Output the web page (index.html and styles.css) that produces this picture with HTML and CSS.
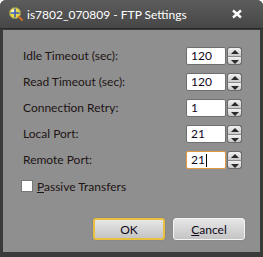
FILE: index.html
```html
<!DOCTYPE html>
<html>
<head>
<meta charset="utf-8">
<link rel="stylesheet" href="styles.css">
</head>
<body>
<div class="window">
  <div class="titlebar">
    <svg class="app-icon" width="16" height="16" viewBox="0 0 16 16">
      <circle cx="7" cy="7" r="5.6" fill="#e8d84a" stroke="#8a8a50" stroke-width="1"/>
      <circle cx="5.5" cy="5.5" r="2.2" fill="#fffbe0" opacity="0.8"/>
      <path d="M7 2.5V11.5M2.5 7H11.5" stroke="#3a5ab8" stroke-width="1.6"/>
      <path d="M10.8 10.8L14 14" stroke="#c8702a" stroke-width="2.2" stroke-linecap="round"/>
    </svg>
    <span class="title">is7802_070809 - FTP Settings</span>
    <svg class="close" width="12" height="10" viewBox="0 0 12 10">
      <path d="M2 1.5L10 8.5M10 1.5L2 8.5" stroke="#ffffff" stroke-width="2.4"/>
    </svg>
  </div>
  <div class="body">
    <div class="form">
      <label class="lbl">Idle Timeout (sec):</label>
      <div class="spinner"><div class="field">120</div><div class="spin"><div class="btn up"></div><div class="btn down"></div></div></div>
      <label class="lbl">Read Timeout (sec):</label>
      <div class="spinner"><div class="field">120</div><div class="spin"><div class="btn up"></div><div class="btn down"></div></div></div>
      <label class="lbl">Connection Retry:</label>
      <div class="spinner"><div class="field">1</div><div class="spin"><div class="btn up"></div><div class="btn down"></div></div></div>
      <label class="lbl">Local Port:</label>
      <div class="spinner"><div class="field">21</div><div class="spin"><div class="btn up"></div><div class="btn down"></div></div></div>
      <label class="lbl">Remote Port:</label>
      <div class="spinner"><div class="field focused">21<span class="caret"></span></div><div class="spin"><div class="btn up"></div><div class="btn down"></div></div></div>
    </div>
    <div class="check-row">
      <span class="checkbox"></span>
      <span class="check-label"><u>P</u>assive Transfers</span>
    </div>
    <div class="buttons">
      <div class="button default">OK</div>
      <div class="button"><u>C</u>ancel</div>
    </div>
  </div>
</div>
</body>
</html>
```
FILE: styles.css
```css
html, body {
  margin: 0;
  padding: 0;
  background: #ffffff;
}
.window {
  width: 263px;
  height: 257px;
  box-sizing: border-box;
  background: #3a3a3a;
  border-radius: 6px 6px 0 0;
  display: flex;
  flex-direction: column;
  font-family: Lato, "Noto Sans", sans-serif;
}
.titlebar {
  height: 29px;
  flex: none;
  display: flex;
  align-items: center;
  padding-left: 8px;
  padding-right: 20px;
  background: linear-gradient(#5c5c5c, #474747);
  border-radius: 6px 6px 0 0;
  border-bottom: 1px solid #2a2a2a;
  box-sizing: border-box;
}
.app-icon {
  flex: none;
  margin-right: 3px;
}
.title {
  color: #ffffff;
  font-size: 12px;
  flex: 1;
}
.close {
  flex: none;
}
.body {
  flex: 1;
  margin: 1px 3px 5px 3px;
  background: #8f8f8f;
  padding: 17px 0 0 20px;
  color: #1e1414;
  font-size: 12px;
}
.form {
  display: grid;
  grid-template-columns: 163px 56px;
  row-gap: 8px;
  align-items: center;
}
.lbl {
  line-height: 18px;
}
.spinner {
  display: flex;
  height: 18px;
}
.field {
  width: 40px;
  height: 18px;
  box-sizing: border-box;
  background: #ffffff;
  border: 1px solid #6e6e6e;
  border-radius: 2px;
  padding-left: 4px;
  line-height: 16px;
  font-size: 12px;
  color: #10081a;
  display: flex;
  align-items: center;
}
.field.focused {
  border-color: #e09a40;
}
.caret {
  display: inline-block;
  width: 1px;
  height: 13px;
  background: #000;
  margin-left: 1px;
}
.spin {
  margin-left: 1px;
  width: 15px;
  height: 18px;
  display: flex;
  flex-direction: column;
}
.btn {
  flex: 1;
  box-sizing: border-box;
  border: 1px solid #6a6a6a;
  background: linear-gradient(#f2f2f2, #c9c9c9);
  position: relative;
}
.btn.up {
  border-radius: 3px 3px 0 0;
  border-bottom-color: #8a8a8a;
}
.btn.down {
  border-radius: 0 0 3px 3px;
  border-top: none;
}
.btn::after {
  content: "";
  position: absolute;
  left: 3px;
  width: 0;
  height: 0;
  border-left: 4px solid transparent;
  border-right: 4px solid transparent;
}
.btn.up::after {
  top: 2px;
  border-bottom: 4px solid #2a2a2a;
}
.btn.down::after {
  top: 3px;
  border-top: 4px solid #2a2a2a;
}
.check-row {
  display: flex;
  align-items: center;
  margin-top: 11px;
  height: 12px;
  margin-left: -2px;
}
.checkbox {
  width: 12px;
  height: 12px;
  box-sizing: border-box;
  background: #ffffff;
  border: 1px solid #777;
  margin-right: 4px;
}
.check-label {
  font-size: 12px;
}
.buttons {
  display: flex;
  gap: 8px;
  margin-top: 26px;
  margin-left: 70px;
}
.button {
  width: 72px;
  height: 22px;
  box-sizing: border-box;
  border: 1px solid #f4f4f4;
  border-radius: 3px;
  background: linear-gradient(#e6e6e6, #c4c4c4);
  display: flex;
  align-items: center;
  justify-content: center;
  font-size: 12px;
  color: #10081a;
  box-shadow: 0 0 0 1px #8a8a8a;
}
.button.default {
  border: 2px solid #e8c040;
}
```
